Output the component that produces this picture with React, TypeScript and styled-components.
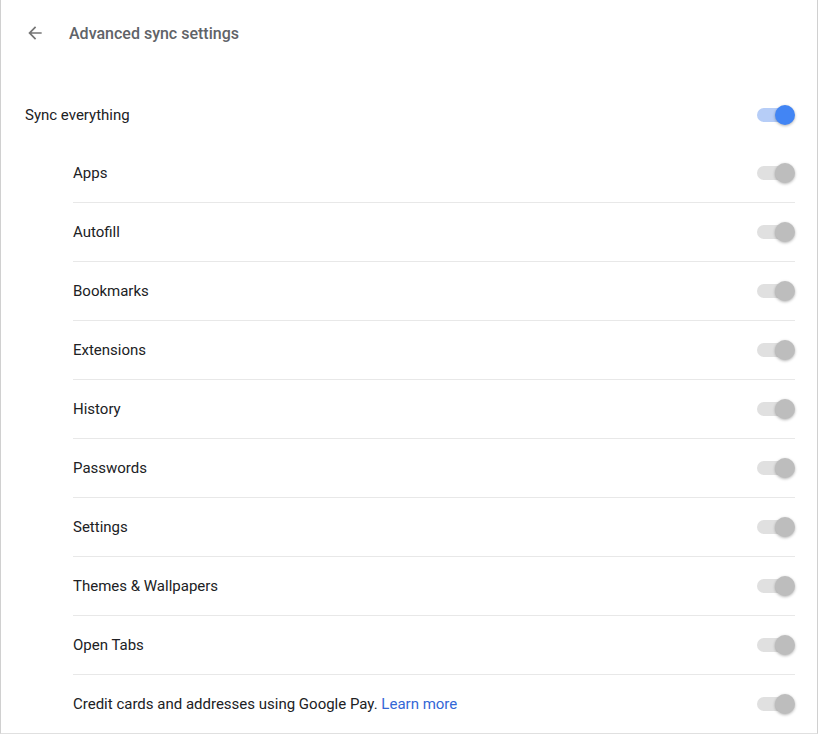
import styled, { createGlobalStyle } from 'styled-components';

const ITEMS = [
  'Apps',
  'Autofill',
  'Bookmarks',
  'Extensions',
  'History',
  'Passwords',
  'Settings',
  'Themes & Wallpapers',
  'Open Tabs',
];

const GlobalStyle = createGlobalStyle`
  body {
    margin: 0;
    background: #fff;
    font-family: Roboto, "Liberation Sans", sans-serif;
  }
`;

const Toggle = ({ on }: { on?: boolean }) => (
  <ToggleWrap>
    <Track $on={on} />
    <Knob $on={on} />
  </ToggleWrap>
);

export default function App() {
  return (
    <>
      <GlobalStyle />
      <Card>
        <Header>
          <BackIcon width="20" height="20" viewBox="0 0 24 24">
            <path
              d="M20 11H7.83l5.59-5.59L12 4l-8 8 8 8 1.41-1.41L7.83 13H20v-2z"
              fill="#757575"
            />
          </BackIcon>
          <Title>Advanced sync settings</Title>
        </Header>
        <MainRow>
          <Label>Sync everything</Label>
          <Toggle on />
        </MainRow>
        <List>
          {ITEMS.map((item) => (
            <Row key={item}>
              <Label>{item}</Label>
              <Toggle />
            </Row>
          ))}
          <Row>
            <Label>
              Credit cards and addresses using Google Pay. <Link>Learn more</Link>
            </Label>
            <Toggle />
          </Row>
        </List>
      </Card>
    </>
  );
}

const Card = styled.div`
  width: 816px;
  border-left: 1px solid #d0d0d0;
  border-right: 1px solid #d0d0d0;
  border-bottom: 1px solid #e0e0e0;
  box-shadow: -1px 0 1px #e4e4e4;
`;

const Header = styled.div`
  display: flex;
  align-items: center;
  height: 66px;
  padding-left: 24px;
  gap: 24px;
`;

const BackIcon = styled.svg`
  flex-shrink: 0;
`;

const Title = styled.h1`
  margin: 0;
  font-size: 16px;
  font-weight: 500;
  color: #5f6368;
`;

const MainRow = styled.div`
  display: flex;
  align-items: center;
  justify-content: space-between;
  height: 58px;
  margin-top: 20px;
  padding: 0 22px 0 24px;
`;

const List = styled.div`
  margin: 0 22px 0 72px;
`;

const Row = styled.div`
  display: flex;
  align-items: center;
  justify-content: space-between;
  height: 58px;
  & + & {
    border-top: 1px solid #e8e8e8;
  }
`;

const Label = styled.span`
  font-size: 15px;
  color: #202124;
`;

const Link = styled.a`
  color: #3367d6;
  cursor: pointer;
`;

const ToggleWrap = styled.div`
  position: relative;
  width: 38px;
  height: 20px;
`;

const Track = styled.div<{ $on?: boolean }>`
  position: absolute;
  left: 0;
  top: 3px;
  width: 34px;
  height: 14px;
  border-radius: 7px;
  background: ${(p) => (p.$on ? '#b6cdf7' : '#e0e0e0')};
`;

const Knob = styled.div<{ $on?: boolean }>`
  position: absolute;
  right: 0;
  top: 0;
  width: 20px;
  height: 20px;
  border-radius: 50%;
  background: ${(p) => (p.$on ? '#4285f4' : '#bdbdbd')};
  box-shadow: 0 1px 3px rgba(0, 0, 0, 0.3);
`;
